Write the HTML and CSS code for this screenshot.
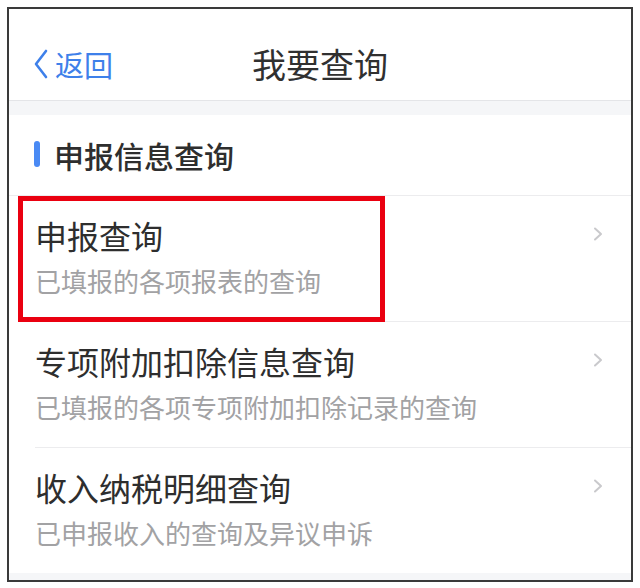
FILE: index.html
```html
<!DOCTYPE html>
<html lang="zh-CN">
<head>
  <meta charset="UTF-8">
  <meta name="viewport" content="width=device-width, initial-scale=1">
  <title>我要查询</title>
  <link rel="stylesheet" href="styles.css">
</head>

<body>

  <div class="marco">
    <div class="barra">
      <a class="volver" href="#">
        <svg class="flecha" width="16" height="30" viewBox="0 0 16 30">
          <polyline points="13,2 3,15 13,28" fill="none" stroke="#3e80ea" stroke-width="2.6" stroke-linecap="round" stroke-linejoin="round"/>
        </svg>
        <span>返回</span>
      </a>
      <h1>我要查询</h1>
    </div>

    <div class="separador"></div>

    <div class="seccion">
      <span class="marca"></span>
      <h2>申报信息查询</h2>
    </div>

    <ul class="lista">
      <li class="fila">
        <div class="textos">
          <div class="titulo">申报查询</div>
          <div class="subtitulo">已填报的各项报表的查询</div>
        </div>
        <svg class="chevron" width="10" height="14" viewBox="0 0 10 14">
          <polyline points="2,1.5 8,7 2,12.5" fill="none" stroke="#c9c9cc" stroke-width="2" stroke-linecap="round" stroke-linejoin="round"/>
        </svg>
        <div class="resaltado"></div>
      </li>
      <li class="fila">
        <div class="textos">
          <div class="titulo">专项附加扣除信息查询</div>
          <div class="subtitulo">已填报的各项专项附加扣除记录的查询</div>
        </div>
        <svg class="chevron" width="10" height="14" viewBox="0 0 10 14">
          <polyline points="2,1.5 8,7 2,12.5" fill="none" stroke="#c9c9cc" stroke-width="2" stroke-linecap="round" stroke-linejoin="round"/>
        </svg>
      </li>
      <li class="fila ultima">
        <div class="textos">
          <div class="titulo">收入纳税明细查询</div>
          <div class="subtitulo">已申报收入的查询及异议申诉</div>
        </div>
        <svg class="chevron" width="10" height="14" viewBox="0 0 10 14">
          <polyline points="2,1.5 8,7 2,12.5" fill="none" stroke="#c9c9cc" stroke-width="2" stroke-linecap="round" stroke-linejoin="round"/>
        </svg>
      </li>
    </ul>
  </div>

</body>
</html>
```

FILE: styles.css
```css
body {
  margin: 7px;
  background: #ffffff;
  font-family: "Noto Sans CJK SC", "Noto Sans", sans-serif;
  color: #2e2e2e;
}

.marco {
  width: 622px;
  height: 571px;
  border: 2px solid #3a3a3a;
  background: #f5f6f8;
  overflow: hidden;
}

.barra {
  position: relative;
  height: 91px;
  background: #ffffff;
  border-bottom: 1px solid #e4e5e8;
  display: flex;
  align-items: center;
  justify-content: center;
  padding-top: 18px;
  box-sizing: border-box;
  height: 92px;
}

.volver {
  position: absolute;
  left: 24px;
  top: 40px;
  display: flex;
  align-items: center;
  gap: 6px;
  color: #3e80ea;
  text-decoration: none;
  font-size: 29px;
  line-height: 30px;
}

.flecha {
  display: block;
}

h1 {
  margin: 0;
  font-size: 34px;
  font-weight: 400;
  line-height: 40px;
  color: #303030;
}

.separador {
  height: 14px;
}

.seccion {
  height: 80px;
  background: #ffffff;
  border-bottom: 1px solid #ececee;
  display: flex;
  align-items: center;
  padding-left: 25px;
}

.marca {
  width: 6px;
  height: 26px;
  border-radius: 3px;
  background: #4a8af4;
  margin-right: 14px;
  margin-top: -3px;
}

h2 {
  margin: 0;
  font-size: 30px;
  font-weight: 500;
  line-height: 40px;
  color: #2e2e2e;
}

.lista {
  list-style: none;
  margin: 0;
  padding: 0 0 0 26px;
  background: #ffffff;
}

.fila {
  position: relative;
  display: flex;
  justify-content: space-between;
  align-items: flex-start;
  height: 126px;
  box-sizing: border-box;
  padding: 19px 28px 0 0;
  border-bottom: 1px solid #ececee;
}

.fila.ultima {
  border-bottom: none;
  height: 125px;
}

.titulo {
  font-size: 32px;
  line-height: 40px;
  color: #2e2e2e;
}

.subtitulo {
  margin-top: 9px;
  font-size: 26px;
  line-height: 34px;
  color: #a2a2a4;
}

.chevron {
  margin-top: 12px;
}

.resaltado {
  position: absolute;
  left: -17px;
  top: 0;
  width: 367px;
  height: 126px;
  box-sizing: border-box;
  border: 5px solid #ea0010;
}
```
